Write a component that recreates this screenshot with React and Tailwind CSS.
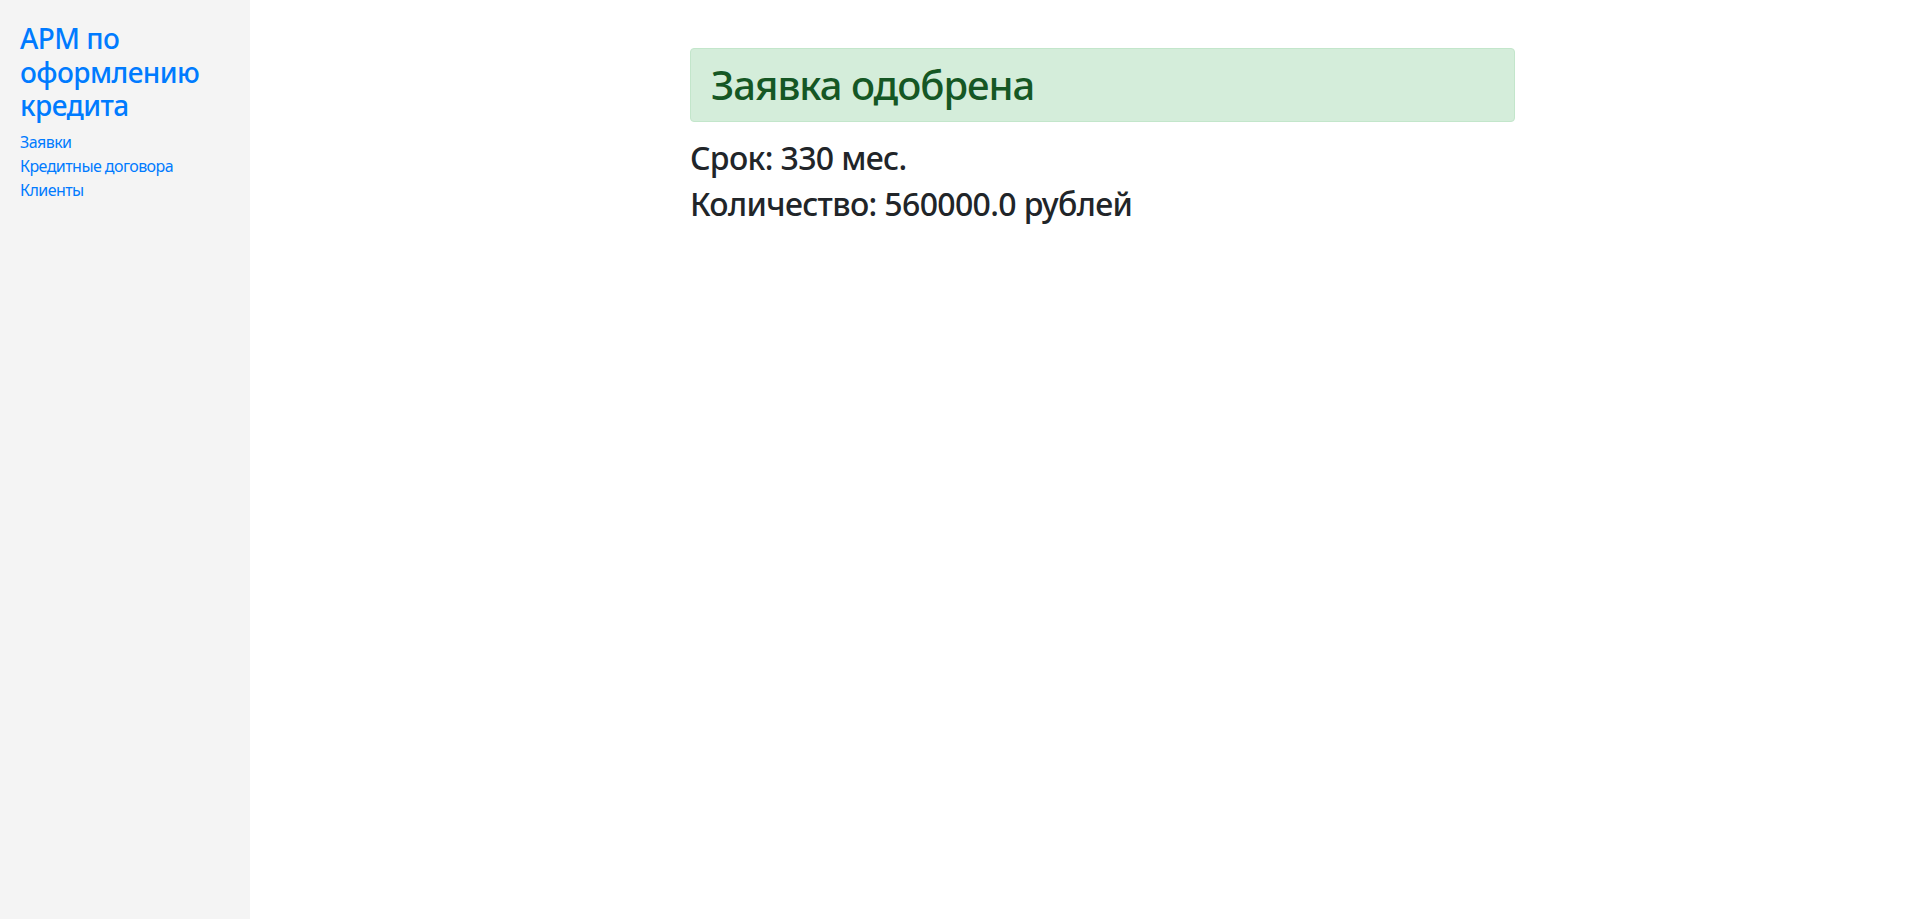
import React from "react";

const font = { fontFamily: '"Noto Sans", "Segoe UI", sans-serif' };

const App = () => {
  return (
    <div className="flex min-h-[919px] w-full bg-white text-[#212529]" style={font}>
      {/* боковое меню */}
      <aside className="w-[250px] shrink-0 bg-[#f4f4f4] px-5 pt-[22px]">
        <h3 className="mb-[7px] text-[28px] font-medium leading-[1.2] tracking-[-0.02em] text-[#007bff]">
          АРМ по оформлению кредита
        </h3>
        <nav className="flex flex-col text-[16px] leading-[24px] tracking-[-0.035em] text-[#007bff]">
          <a href="#">Заявки</a>
          <a href="#">Кредитные договора</a>
          <a href="#">Клиенты</a>
        </nav>
      </aside>

      {/* содержимое */}
      <main className="flex-1 pl-[440px] pt-[48px]">
        <div className="w-[825px]">
          <div className="mb-[17px] rounded border border-[#c3e6cb] bg-[#d4edda] px-5 py-3 text-[#155724]">
            <h1 className="text-[40px] font-medium leading-[1.2] tracking-[-0.025em]">Заявка одобрена</h1>
          </div>
          <h2 className="mb-2 text-[32px] font-medium leading-[1.2] tracking-[-0.02em]">Срок: 330 мес.</h2>
          <h2 className="mb-2 text-[32px] font-medium leading-[1.2] tracking-[-0.02em]">Количество: 560000.0 рублей</h2>
        </div>
      </main>
    </div>
  );
};

export default App;
